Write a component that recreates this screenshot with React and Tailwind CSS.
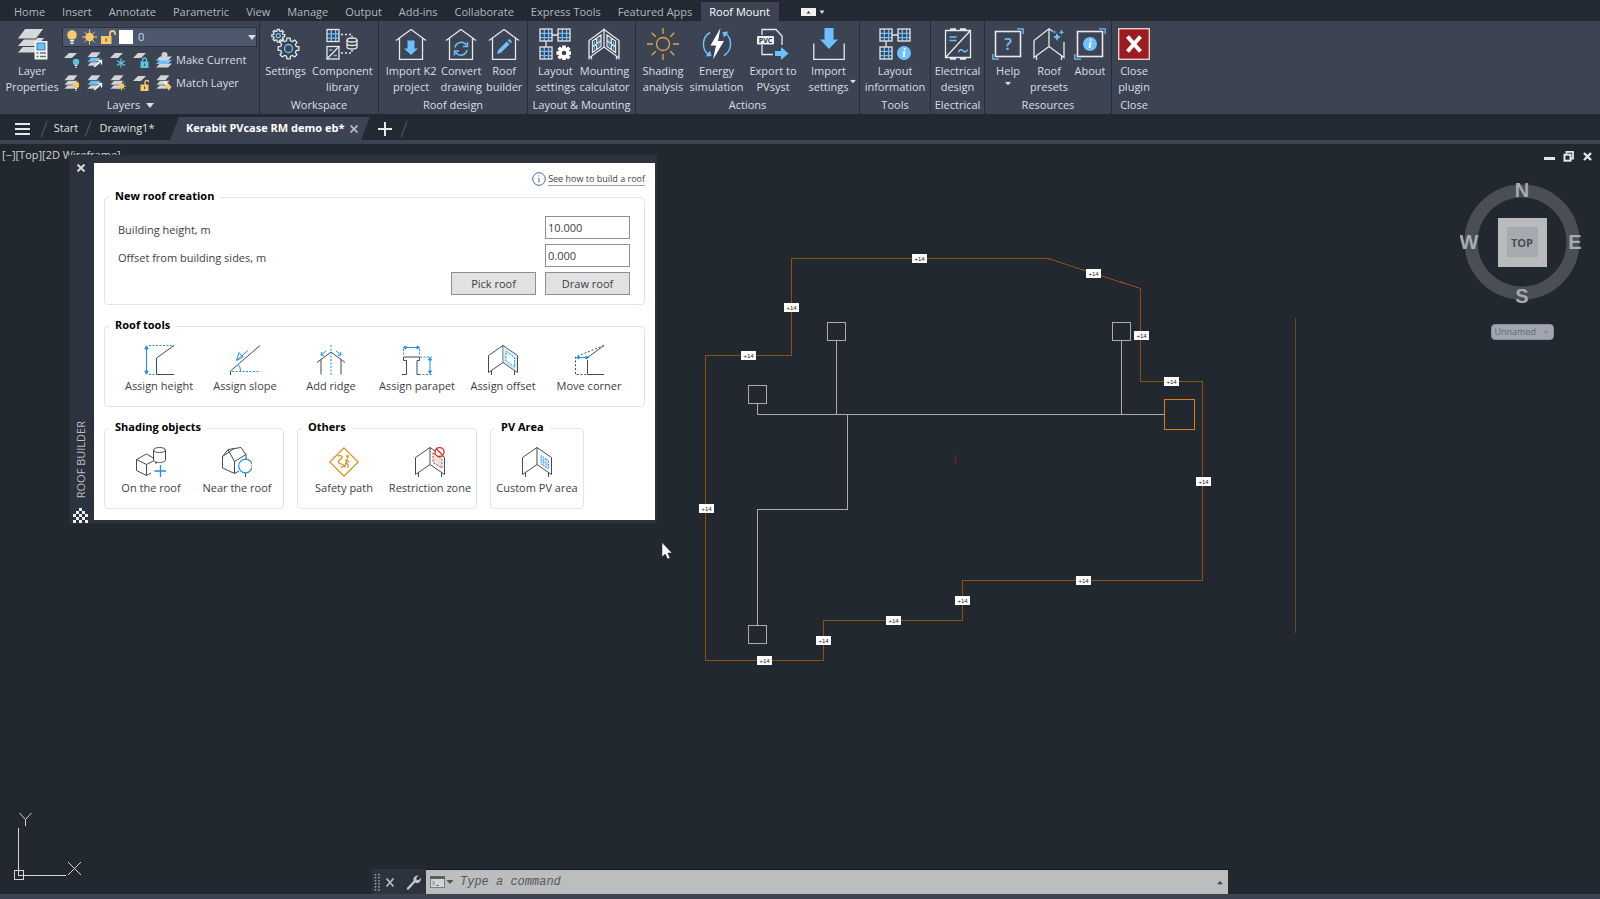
import { useState } from 'react';

// ─── SMALL DRAWING HELPERS ────────────────────────────────────────────────────
const WHITE = '#e6e8ea';
const BLUE = '#6cc0ff';
const INK = '#444a50';
const ACCENT = '#1e90f0';

const gearPath = (cx, cy, outer, inner, teeth) => {
    const pts = [];
    const step = (Math.PI * 2) / teeth;
    for (let i = 0; i < teeth; i++) {
        const a = i * step - Math.PI / 2;
        [[-0.32, inner], [-0.2, outer], [0.2, outer], [0.32, inner]].forEach(([o, r]) => {
            pts.push(`${(cx + Math.cos(a + o * step) * r).toFixed(2)} ${(cy + Math.sin(a + o * step) * r).toFixed(2)}`);
        });
    }
    return `M${pts.join('L')}Z`;
};

const Big = ({ children }) => (
    <svg viewBox="0 0 32 32" className="size-8 shrink-0" fill="none" stroke={WHITE} strokeWidth="1.3">{children}</svg>
);

const Tool = ({ children }) => (
    <svg viewBox="0 0 30 30" className="size-[30px] shrink-0" fill="none" stroke={INK} strokeWidth="1">{children}</svg>
);

const Caret = ({ className = '' }) => (
    <svg viewBox="0 0 8 5" className={`h-[5px] w-2 shrink-0 ${className}`} fill="currentColor"><path d="M0 0h8L4 5z" /></svg>
);

const PvGrid = ({ x, y }) => (
    <g>
        <path d={`M${x + 4.3} ${y}v12M${x + 8.6} ${y}v12M${x} ${y + 4.3}h12M${x} ${y + 8.6}h12`} stroke={BLUE} />
        <rect x={x} y={y} width="12" height="12" />
    </g>
);

const House = ({ children }) => (
    <Big>
        <path d="M1 12.5L16 1.5L31 12.5M4.5 10.5V31.3H27.5V10.5" />
        {children}
    </Big>
);

// ─── RIBBON ICONS ─────────────────────────────────────────────────────────────
const LayerPropertiesIcon = () => (
    <Big>
        <g fill="#d6d8da" stroke="#3c4352" strokeWidth="1">
            <path d="M1 25L9 16H29L21 25z" />
            <path d="M1 18.5L9 9.5H29L21 18.5z" />
            <path d="M1 11L9 .5H28L20 11z" />
        </g>
        <rect x="18.5" y="13" width="13" height="18.5" fill="#f2f3f4" stroke="none" />
        <rect x="21" y="15" width="8" height="7" fill={BLUE} stroke="#2c6ea8" strokeWidth=".8" />
        <path d="M20.5 25h2M24 25h6M20.5 28.5h2M24 28.5h6" stroke="#6a7078" />
    </Big>
);

const SettingsIcon = () => (
    <Big>
        <path d={gearPath(8.3, 7.7, 6.5, 4.8, 8)} />
        <circle cx="8.3" cy="7.7" r="2" stroke={BLUE} />
        <path d={gearPath(18.5, 20.5, 10.5, 8, 8)} />
        <circle cx="18.5" cy="20.5" r="4" stroke={BLUE} />
    </Big>
);

const ComponentIcon = () => (
    <Big>
        <PvGrid x={1} y={1.5} />
        <rect x="1" y="18.5" width="12" height="12.5" />
        <path d="M1 31L13 18.5" />
        <path d="M3 22h3.5M7.5 27.5h3.5" stroke={BLUE} />
        <path d="M15 6.5H26V9M15 25H26V22" strokeDasharray="2 2" />
        <ellipse cx="26" cy="12" rx="5" ry="2" />
        <path d="M21 12v7c0 1.3 2.2 2 5 2s5-.7 5-2v-7M21 15.5c0 1.3 2.2 2 5 2s5-.7 5-2" />
    </Big>
);

const ImportK2Icon = () => (
    <House><path d="M12.5 12.5h7v8h3.5L16 27L9 20.5h3.5z" fill={BLUE} stroke="none" /></House>
);

const ConvertIcon = () => (
    <House>
        <path d="M10 19.5a6.2 6.2 0 0 1 11.5-2M22 22a6.2 6.2 0 0 1-11.5 2" stroke={BLUE} strokeWidth="1.5" />
        <path d="M22.5 14v4.5H18M9.5 27.5v-4.5H14" stroke={BLUE} strokeWidth="1.5" />
    </House>
);

const BuilderIcon = () => (
    <House><path d="M9 26l1.2-4 8.500-8.500 2.800 2.800-8.500 8.500zM19.700 12.500l1-1a1 1 0 0 1 1.400 0l1.400 1.400a1 1 0 0 1 0 1.400l-1 1z" fill={BLUE} stroke="none" /></House>
);

const LayoutSettingsIcon = () => (
    <Big>
        <PvGrid x={1} y={1} />
        <PvGrid x={19} y={1} />
        <PvGrid x={1} y={19} />
        <path d="M13 7h6M7 13v6" />
        <path d={gearPath(25, 25, 7, 5, 8)} fill="#fff" stroke="#fff" />
        <circle cx="25" cy="25" r="2.3" fill="#3c4352" stroke="none" />
    </Big>
);

const MountingIcon = () => (
    <Big>
        <path d="M1 12.5L16 1.5V19L1 30zM31 12.5L16 1.5V19L31 30zM3.5 28.5V31.5M28.5 28.5V31.5M1 30v1.5M31 30v1.5" />
        <path d="M4.5 13L13 7V18.5L4.5 24.5zM8.7 10v11.5M4.5 18.7L13 12.7M27.5 13L19 7V18.5L27.5 24.5zM23.3 10v11.5M27.5 18.7L19 12.7" />
        <path d="M6.500 13.500v8M11 10.500v8M21 10.500v8M25.500 13.500v8" stroke={BLUE} strokeWidth="1" />
    </Big>
);

const ShadingIcon = () => (
    <Big>
        <g stroke="#e3a548">
            <circle cx="16" cy="16" r="6.5" />
            <path d="M16 0v6M16 26v6M0 16h6M26 16h6M4.7 4.7l4 4M23.3 23.3l4 4M4.7 27.3l4-4M23.3 8.7l4-4" />
        </g>
    </Big>
);

const EnergyIcon = () => (
    <Big>
        <path d="M9 4.5A13.5 13.5 0 0 0 8 27M23 27.5A13.5 13.5 0 0 0 24 5" stroke={BLUE} strokeWidth="1.5" />
        <path d="M4.5 28.5l6-.5-1.5-5.5zM27.5 3.5l-6 .5 1.5 5.5z" fill={BLUE} stroke="none" />
        <path d="M19.5 0L9.5 17.5h5.5L12 31.5L23 13h-6z" fill="#fff" stroke="none" />
    </Big>
);

const ExportIcon = () => (
    <Big>
        <path d="M5 7V1.500H19L25 8V17M5 17V26.500H16" />
        <rect x="0" y="8" width="17" height="8.500" rx="1" fill="#eef0f2" stroke="none" />
        <text x="8.500" y="14.700" textAnchor="middle" fontSize="7" fontWeight="700" fill="#2c333f" stroke="none" fontFamily="Open Sans, sans-serif">PVC</text>
        <path d="M18 23h6v-4l7.500 6.500L24 32v-4h-6z" fill={BLUE} stroke="none" />
    </Big>
);

const ImportSettingsIcon = () => (
    <Big>
        <path d="M.8 15.5V31.3H31.2V15.5" />
        <path d="M11.5 0h9v11.500h4.500L16 21L7 11.500h4.500z" fill={BLUE} stroke="none" />
    </Big>
);

const InfoDot = ({ cx, cy, r }) => (
    <g stroke="none">
        <circle cx={cx} cy={cy} r={r} fill={BLUE} />
        <text x={cx} y={cy + 4} textAnchor="middle" fontSize="12" fontStyle="italic" fontWeight="700" fill="#fff" fontFamily="Liberation Serif, serif">i</text>
    </g>
);

const LayoutInfoIcon = () => (
    <Big>
        <PvGrid x={1} y={1} />
        <PvGrid x={19} y={1} />
        <PvGrid x={1} y={19} />
        <path d="M13 7h6M7 13v6" />
        <InfoDot cx={25} cy={25} r={7} />
    </Big>
);

const ElectricalIcon = () => (
    <Big>
        <path d="M3.5 2.5H28.5V29.5H3.5zM4 29L28 3M8 1h6M18 1h6M8 31h6M18 31h6" />
        <path d="M7.5 9h7M7.5 12.5h7M16.5 24c1.5-2.8 3-2.8 4.5-1.2s3 1.6 4.5-1.3" stroke={BLUE} strokeWidth="1.6" />
    </Big>
);

const Framed = ({ children }) => (
    <Big>
        <rect x="3.5" y="3.5" width="25" height="25" strokeWidth="1.6" />
        <path d="M25 .8h6.200V6M7 31.200H.8V26" stroke={BLUE} />
        {children}
    </Big>
);

const HelpIcon = () => (
    <Framed><text x="16" y="22" textAnchor="middle" fontSize="17" fontWeight="600" fill={BLUE} stroke="none" fontFamily="Open Sans, sans-serif">?</text></Framed>
);

const AboutIcon = () => (
    <Framed><InfoDot cx={16} cy={16} r={7} /></Framed>
);

const PresetsIcon = () => (
    <Big>
        <path d="M20 3.500L16 .8L1 12.500V29.500L16 18.500L31 29.500V14M16 .8V18.500M3.500 28V32M28.500 28V32" />
        <path d="M24 5l1.300 2.700L28 9l-2.700 1.300L24 13l-1.300-2.700L20 9l2.700-1.300zM28.500 1.500l.8 2 2 .8-2 .8-.8 2-.8-2-2-.8 2-.8zM21.500 2l.5 1.500L23.500 4l-1.500.5-.5 1.500-.5-1.500-1.500-.5 1.500-.5z" fill={BLUE} stroke="none" />
    </Big>
);

const ClosePluginIcon = () => (
    <Big>
        <rect x=".7" y=".7" width="30.6" height="30.6" fill="#9c1c20" stroke="#f0d8d8" />
        <path d="M9.500 8.500L22.500 23.500M22.500 8.500L9.500 23.500" stroke="#fff" strokeWidth="4" />
    </Big>
);

// ─── LAYER STRIP ICONS ────────────────────────────────────────────────────────
const SHEET = '#d2d4d6';
const TEAL = '#5cc4de';
const YELLOW = '#f5c869';

const Small = ({ children }) => (
    <svg viewBox="0 0 16 16" className="size-4 shrink-0" fill="none">{children}</svg>
);

const OneSheet = () => <path d="M0 6L5 1H13L8 6z" fill={SHEET} />;
const Sheets = ({ mid = SHEET }) => (
    <g stroke="#3c4352" strokeWidth=".6">
        <path d="M0 14L4 9.5H14L10 14z" fill={SHEET} />
        <path d="M0 10L4 5.5H14L10 10z" fill={mid} />
        <path d="M0 5.5L4.5 0H14L9.5 5.5z" fill={SHEET} />
    </g>
);
const Bulb = ({ color }) => (
    <g><circle cx="12" cy="10" r="3.2" fill={color} /><path d="M10.8 13.5h2.4M11.2 15.2h1.600" stroke="#fff" /></g>
);
const Arrow = () => <path d="M7 15L14 9M14.5 12.5V8.5H10.5" stroke="#f4f6f8" strokeWidth="1.4" />;
const Flake = () => <path d="M11 6.5v9M7 8.800l8 4.600M15 8.800l-8 4.600" stroke={TEAL} strokeWidth="1.3" />;
const MiniSun = () => (
    <g><circle cx="11.5" cy="11" r="2.6" fill={YELLOW} /><path d="M11.5 6.5v9M7 11h9M8.3 7.8l6.4 6.4M14.7 7.8l-6.4 6.4" stroke={YELLOW} strokeWidth=".9" /></g>
);
const Padlock = ({ color, open }) => (
    <g>
        <path d={open ? 'M12 10V7.5a2 2 0 0 1 4 0' : 'M9.5 10V8a2 2 0 0 1 4 0v2'} stroke={color} strokeWidth="1.3" />
        <rect x="7.5" y="9.5" width="8" height="6.5" fill={color} />
        <path d="M11.5 11.5v2.5" stroke="#3c4352" />
    </g>
);

const LAYER_TOOLS = [
    { name: 'Off', icon: <Small><OneSheet /><Bulb color={TEAL} /></Small> },
    { name: 'Isolate', icon: <Small><Sheets mid={BLUE} /><Arrow /></Small> },
    { name: 'Freeze', icon: <Small><OneSheet /><Flake /></Small> },
    { name: 'Lock', icon: <Small><OneSheet /><Padlock color={TEAL} /></Small> },
    { name: 'Turn All Layers On', icon: <Small><Sheets /><Bulb color={YELLOW} /></Small> },
    { name: 'Unisolate', icon: <Small><Sheets mid={BLUE} /><Arrow /></Small> },
    { name: 'Thaw All Layers', icon: <Small><Sheets /><MiniSun /></Small> },
    { name: 'Unlock', icon: <Small><OneSheet /><Padlock color={YELLOW} open /></Small> },
];

const MakeCurrentIcon = () => (
    <Small>
        <path d="M0 15.5L4 11.5H16L12 15.5z" fill={SHEET} />
        <path d="M0 12L4 8H16L12 12z" fill={BLUE} />
        <path d="M0 8.5L4 4.5H16L12 8.5z" fill={SHEET} />
        <circle cx="8.5" cy="3" r="3" fill={SHEET} />
    </Small>
);

const MatchLayerIcon = () => (
    <Small>
        <Sheets />
        <path d="M9 8l2-1 4.5 5-2.5 3.5L9.5 12z" fill={YELLOW} />
        <path d="M8 6.5l3 3" stroke="#fff" strokeWidth="1.5" />
    </Small>
);

// ─── RIBBON DATA ──────────────────────────────────────────────────────────────
const MENU = ['Home', 'Insert', 'Annotate', 'Parametric', 'View', 'Manage', 'Output', 'Add-ins', 'Collaborate', 'Express Tools', 'Featured Apps', 'Roof Mount'];

const PANELS = [
    { title: 'Workspace', width: 'w-[119px]', gap: 'gap-1.5', items: [
        { icon: SettingsIcon, lines: ['Settings'] },
        { icon: ComponentIcon, lines: ['Component', 'library'] },
    ] },
    { title: 'Roof design', width: 'w-[149px]', gap: 'gap-1 pl-0.5', items: [
        { icon: ImportK2Icon, lines: ['Import K2', 'project'] },
        { icon: ConvertIcon, lines: ['Convert', 'drawing'] },
        { icon: BuilderIcon, lines: ['Roof', 'builder'] },
    ] },
    { title: 'Layout & Mounting', width: 'w-[108px]', gap: 'gap-1 pl-0.5', items: [
        { icon: LayoutSettingsIcon, lines: ['Layout', 'settings'] },
        { icon: MountingIcon, lines: ['Mounting', 'calculator'] },
    ] },
    { title: 'Actions', width: 'w-[224px]', gap: 'gap-1.5', items: [
        { icon: ShadingIcon, lines: ['Shading', 'analysis'] },
        { icon: EnergyIcon, lines: ['Energy', 'simulation'] },
        { icon: ExportIcon, lines: ['Export to', 'PVsyst'] },
        { icon: ImportSettingsIcon, lines: ['Import', 'settings'], menu: 'side' },
    ] },
    { title: 'Tools', width: 'w-[71px]', gap: '', items: [{ icon: LayoutInfoIcon, lines: ['Layout', 'information'] }] },
    { title: 'Electrical', width: 'w-[54px]', gap: '', items: [{ icon: ElectricalIcon, lines: ['Electrical', 'design'] }] },
    { title: 'Resources', width: 'w-[127px]', gap: 'gap-1.5 pl-0.5', items: [
        { icon: HelpIcon, lines: ['Help'], menu: 'below' },
        { icon: PresetsIcon, lines: ['Roof', 'presets'] },
        { icon: AboutIcon, lines: ['About'] },
    ] },
    { title: 'Close', width: 'w-11', gap: '', last: true, items: [{ icon: ClosePluginIcon, lines: ['Close', 'plugin'] }] },
];

const RibbonButton = ({ item }) => {
    const Icon = item.icon;
    return (
        <button type="button" className={`relative flex shrink-0 flex-col items-center whitespace-nowrap leading-4 ${item.menu === 'side' ? 'mr-1 ml-1.5' : ''}`}>
            <Icon />
            <span className="mt-[3px]">{item.lines[0]}</span>
            {item.lines[1] && <span>{item.lines[1]}</span>}
            {item.menu === 'below' && <Caret className="mt-0.5 scale-75" />}
            {item.menu === 'side' && <Caret className="absolute -right-2 bottom-3 scale-75" />}
        </button>
    );
};

const RibbonPanel = ({ panel }) => (
    <section className={`flex shrink-0 flex-col items-center pt-[7px] ${panel.width} ${panel.last ? '' : 'border-r border-[#262c36]'}`}>
        <div className={`flex h-[68px] justify-center ${panel.gap}`}>
            {panel.items.map((item) => <RibbonButton key={item.lines.join(' ')} item={item} />)}
        </div>
        <h2 className="mt-px whitespace-nowrap leading-4">{panel.title}</h2>
    </section>
);

const LayersPanel = () => (
    <section className="ml-0.5 flex w-[258px] shrink-0 flex-col border-r border-[#262c36] pt-[6px]">
        <div className="flex h-[69px]">
            <button type="button" className="flex w-[60px] flex-col items-center leading-4">
                <span className="pt-px"><LayerPropertiesIcon /></span>
                <span className="mt-[3px]">Layer</span>
                <span>Properties</span>
            </button>
            <div className="flex-1 pr-0.5">
                <div className="flex h-5 items-center border border-[#2c3340] bg-[#4b586e] px-1">
                    <svg viewBox="0 0 66 16" className="h-4 w-[66px] shrink-0" fill="none">
                        <circle cx="5" cy="6" r="4.8" fill={YELLOW} />
                        <path d="M3 11h4v1.5H3zM3.5 13.5h3V15h-3z" fill="#fff" />
                        <circle cx="22.5" cy="8" r="4.3" fill={YELLOW} />
                        <path d="M22.5 .5v15M15 8h15M17.2 2.7l10.6 10.6M27.8 2.7L17.2 13.3" stroke={YELLOW} />
                        <path d="M43 8V4.5a2.5 2.5 0 0 1 5 0V6" stroke={YELLOW} strokeWidth="1.8" />
                        <rect x="34" y="7" width="10.5" height="8" fill={YELLOW} />
                        <path d="M39.2 9.5v3" stroke="#6b5a30" strokeWidth="1.3" />
                        <rect x="52" y="1" width="14" height="14" fill="#fff" />
                    </svg>
                    <select aria-label="Layer" defaultValue="0" className="min-w-0 flex-1 appearance-none bg-transparent pl-[5px] outline-none">
                        <option>0</option>
                    </select>
                    <Caret className="-mr-1" />
                </div>
                <div className="mt-[5px] flex pl-0.5">
                    <div className="grid shrink-0 grid-cols-[repeat(4,16px)] gap-[7px]">
                        {LAYER_TOOLS.map((t) => <button key={t.name} type="button" aria-label={t.name}>{t.icon}</button>)}
                    </div>
                    <div className="flex flex-1 flex-col gap-[7px] pl-[7px] leading-4 whitespace-nowrap">
                        <button type="button" className="flex items-center gap-1"><MakeCurrentIcon />Make Current</button>
                        <button type="button" className="flex items-center gap-1"><MatchLayerIcon />Match Layer</button>
                    </div>
                </div>
            </div>
        </div>
        <button type="button" className="mt-px flex items-center justify-center gap-1.5 leading-4">Layers <Caret /></button>
    </section>
);

const Slash = () => (
    <svg viewBox="0 0 8 16" className="h-4 w-2 shrink-0" stroke="#59616d"><path d="M1 16L7 0" /></svg>
);

const FileTabs = () => (
    <nav aria-label="Drawings" className="flex h-[26px] items-end bg-[#222933] text-[#dfe1e3]">
        <div className="flex h-[23px] items-center">
            <button type="button" aria-label="Menu" className="ml-[15px] mr-2.5">
                <svg viewBox="0 0 15 12" className="h-3 w-[15px]" stroke={WHITE} strokeWidth="2"><path d="M0 1h15M0 6h15M0 11h15" /></svg>
            </button>
            <Slash />
            <button type="button" className="w-9 text-center">Start</button>
            <Slash />
            <button type="button" className="w-[70px] text-center">Drawing1*</button>
            <div className="ml-2 flex h-[23px] w-[200px] items-center justify-between bg-[#3c4352] pr-3 pl-4 [clip-path:polygon(9px_0,100%_0,calc(100%-9px)_100%,0_100%)]">
                <button type="button" className="font-bold whitespace-nowrap text-white">Kerabit PVcase RM demo eb*</button>
                <button type="button" aria-label="Close drawing">
                    <svg viewBox="0 0 8 8" className="size-2" stroke="#b4b9c0" strokeWidth="1.8"><path d="M.5.5l7 7M7.5.5l-7 7" /></svg>
                </button>
            </div>
            <button type="button" aria-label="New drawing" className="mr-2 ml-2">
                <svg viewBox="0 0 14 14" className="size-3.5" stroke={WHITE} strokeWidth="2"><path d="M7 0v14M0 7h14" /></svg>
            </button>
            <Slash />
        </div>
    </nav>
);

// ─── ROOF BUILDER PALETTE ─────────────────────────────────────────────────────
const RoofPair = ({ children }) => (
    <Tool>
        <path d="M.5 10.5L15 .5L29.5 10.5V27.5L15 17.5L.5 27.5zM15 .5V17.5M3.5 26V30M26.5 26V30" />
        {children}
    </Tool>
);

const ROOF_TOOLS = [
    { label: 'Assign height', icon: (
        <Tool>
            <path d="M30 .5L12.5 13V29.5H30" />
            <path d="M2.5 1V29M.8 4L2.5 .8L4.2 4zM.8 26l1.7 3.2L4.2 26z" stroke={ACCENT} fill={ACCENT} />
            <path d="M5 .5H28M5 29.5H11" stroke={ACCENT} strokeDasharray="2 1.5" />
        </Tool>
    ) },
    { label: 'Assign slope', icon: (
        <Tool>
            <path d="M30 .5L.5 26V30" />
            <path d="M18 5.5L7 15M9 7.5L6.5 15.5L13 12zM8.5 20a9 9 0 0 1 2 6" stroke={ACCENT} />
            <path d="M2 26.5H30" stroke={ACCENT} strokeDasharray="2 1.5" />
        </Tool>
    ) },
    { label: 'Add ridge', icon: (
        <Tool>
            <path d="M1 17.5L15 7L29 17.5M5 14.5V29.5M25 14.5V29.5" />
            <path d="M15 0V30" stroke={ACCENT} strokeDasharray="2 1.5" />
            <path d="M10 6L5 10M8 10.5L5 10l.5-3M20 6l5 4M22 10.5l3-.5-.5-3" stroke={ACCENT} />
        </Tool>
    ) },
    { label: 'Assign parapet', icon: (
        <Tool>
            <path d="M1.5 12H17.5V15.5H15V29.5M1.5 12V15.5H4.5V29.5H0M15 29.5h2" />
            <path d="M1.5 2.5h16M4 1L1.5 2.5L4 4zM15 1l2.500 1.500L15 4zM28 12.500v16M26.500 15L28 12.500l1.500 2.500zM26.500 26l1.500 2.500 1.500-2.500z" stroke={ACCENT} fill={ACCENT} />
            <path d="M1.5 4V11M17.5 4V11M18 12h12M17 29.5H30" stroke={ACCENT} strokeDasharray="2 1.5" />
        </Tool>
    ) },
    { label: 'Assign offset', icon: (
        <RoofPair>
            <path d="M15.5 1.5L29 11V26.5L15.5 17z" fill="#d5ecfb" stroke="none" />
            <path d="M18 6.5L26.5 12.5V22L18 16z" fill="#fff" stroke={ACCENT} strokeDasharray="2 1.3" />
        </RoofPair>
    ) },
    { label: 'Move corner', icon: (
        <Tool>
            <path d="M30 .5L13.5 12.5M13.5 15V29.5H30" />
            <path d="M30 .5L1.5 12V29.5H12" strokeDasharray="2 1.8" />
            <path d="M2.5 12.5H14M5 11L2.5 12.5L5 14zM12 11l2.5 1.5L12 14z" stroke={ACCENT} fill={ACCENT} />
        </Tool>
    ) },
];

const SHADING_TOOLS = [
    { label: 'On the roof', icon: (
        <Tool>
            <path d="M.5 12.5L10.5 7L20 12.5V17M.5 12.5V23.5L10.5 28.5V17.5L.5 12.5M10.5 17.5L20 12.5M10.5 28.5L15 26" />
            <path d="M17.5 3v10c0 1.5 3 2.5 6 2.5s6-1 6-2.5V3" fill="#fff" />
            <ellipse cx="23.5" cy="3" rx="6" ry="2.5" fill="#fff" />
            <path d="M24.5 18V30M18.5 24H30.5" stroke={ACCENT} strokeWidth="1.3" />
        </Tool>
    ) },
    { label: 'Near the roof', icon: (
        <Tool>
            <path d="M.5 9.5L6 2.5L19 .5L24 7.5V14M.5 9.5V21L12.5 26.5V14.5L6 2.5M12.5 14.5L24 7.5M12.5 26.5L17 24M12 1.5L.5 9.5M23.5 26V30" />
            <circle cx="23.5" cy="19" r="6.8" fill="#fff" stroke={ACCENT} strokeWidth="1.2" />
        </Tool>
    ) },
];

const OTHER_TOOLS = [
    { label: 'Safety path', icon: (
        <Tool>
            <g stroke="#d98c1f" strokeWidth="1.2">
                <path d="M15 .8L29.2 15L15 29.2L.8 15z" />
                <path d="M8.500 9c4-1 6 .5 4 2.500s-4 2-3 4 4 1 5 2.500-1 2.500-3 2M18.500 11.500l-1.500 4 2 2v3.500M17 15.500l-1.500 5M16 13l4.500 2" />
                <circle cx="18.500" cy="9.500" r=".8" />
            </g>
        </Tool>
    ) },
    { label: 'Restriction zone', icon: (
        <RoofPair>
            <path d="M18 6L27 12V21L18 15.5z" fill="#e3e5e7" stroke="#e03020" strokeDasharray="2 1.5" />
            <circle cx="24.5" cy="5" r="4.5" fill="#fff" stroke="#e03020" strokeWidth="1.3" />
            <path d="M21.500 2L27.500 8" stroke="#e03020" strokeWidth="1.3" />
        </RoofPair>
    ) },
];

const PV_TOOLS = [
    { label: 'Custom PV area', icon: (
        <RoofPair>
            <path d="M19 8.5L26.5 13.5V22L19 17z" fill="#cfe8fa" stroke={ACCENT} strokeDasharray="1.5 1" />
            <path d="M21.5 10v8.5M24 12v8.5M19 12.8l7.500 5" stroke={ACCENT} strokeWidth=".6" strokeDasharray="1.5 1" />
        </RoofPair>
    ) },
];

const LEGEND = 'ml-1 px-1.5 pb-0.5 font-bold leading-4 text-black';

const ToolGroup = ({ title, tools, pad = 'px-[3px]' }) => (
    <fieldset className="rounded border border-[#dfe5e8] pb-3">
        <legend className={LEGEND}>{title}</legend>
        <div className={`flex pt-2.5 ${pad}`}>
            {tools.map((t) => (
                <button key={t.label} type="button" className="flex w-[86px] flex-col items-center gap-[3px] leading-4 whitespace-nowrap">
                    {t.icon}
                    {t.label}
                </button>
            ))}
        </div>
    </fieldset>
);

const FIELD = 'h-[23px] w-[85px] border border-[#8b9097] leading-4';

const RoofBuilder = () => {
    const [height, setHeight] = useState('10.000');
    const [offset, setOffset] = useState('0.000');

    return (
        <aside aria-label="Roof builder" className="absolute top-[11px] left-[69px] flex w-[588px] border border-[#2a303b] bg-[#2c333f] pt-[7px] pr-px">
            <div className="flex w-6 shrink-0 flex-col items-center pr-[3px]">
                <button type="button" aria-label="Close palette" className="mt-px">
                    <svg viewBox="0 0 8 8" className="size-2" stroke="#d8dade" strokeWidth="2"><path d="M.5.5l7 7M7.5.5l-7 7" /></svg>
                </button>
                <span className="mt-auto rotate-180 text-[#b9bdc4] [writing-mode:vertical-rl] leading-4">ROOF BUILDER</span>
                <svg viewBox="0 0 15 15" className="mt-2.5 size-[15px]" fill="#eceef0">
                    <path d="M6 0h3v3H6zM3 3h3v3H3zM9 3h3v3H9zM0 6h3v3H0zM6 6h3v3H6zM12 6h3v3h-3zM3 9h3v3H3zM9 9h3v3H9zM0 12h3v3H0zM6 12h3v3H6zM12 12h3v3h-3z" />
                </svg>
            </div>
            <div className="mb-[3px] flex-1 bg-white px-2.5 pt-2 pb-[11px] text-[#3a3f45]">
                <a href="#help" className="flex h-4 items-center justify-end gap-0.5 text-[9px]">
                    <svg viewBox="0 0 14 14" className="size-3.5" fill="none" stroke="#3f6c92"><circle cx="7" cy="7" r="6.3" /><path d="M7 6v4.5M7 3.5v1" /></svg>
                    <span className="border-b border-[#9a9fa5] leading-3">See how to build a roof</span>
                </a>
                <fieldset className="mt-px rounded border border-[#dfe5e8] pb-[9px]">
                    <legend className={LEGEND}>New roof creation</legend>
                    <div className="flex flex-col gap-[5px] pt-2.5 pr-3.5 pl-[13px]">
                        <div className="flex items-center justify-between">
                            <label htmlFor="height" className="pt-[5px]">Building height, m</label>
                            <input id="height" value={height} onChange={(e) => setHeight(e.target.value)} className={`${FIELD} bg-white px-0.5`} />
                        </div>
                        <div className="flex items-center justify-between">
                            <label htmlFor="offset" className="pt-[5px]">Offset from building sides, m</label>
                            <input id="offset" value={offset} onChange={(e) => setOffset(e.target.value)} className={`${FIELD} bg-white px-0.5`} />
                        </div>
                        <div className="flex justify-end gap-[9px]">
                            <button type="button" className={`${FIELD} bg-[#e1e1e1]`}>Pick roof</button>
                            <button type="button" className={`${FIELD} bg-[#e1e1e1]`}>Draw roof</button>
                        </div>
                    </div>
                </fieldset>
                <div className="mt-3">
                    <ToolGroup title="Roof tools" tools={ROOF_TOOLS} pad="px-[11px]" />
                </div>
                <div className="mt-3 flex gap-[13px]">
                    <ToolGroup title="Shading objects" tools={SHADING_TOOLS} />
                    <ToolGroup title="Others" tools={OTHER_TOOLS} />
                    <ToolGroup title="PV Area" tools={PV_TOOLS} />
                </div>
            </div>
        </aside>
    );
};

// ─── DRAWING AREA ─────────────────────────────────────────────────────────────
const HEIGHT_TAGS = [
    [919, 258], [1093, 273], [791, 307], [748, 355], [1141, 335], [1171, 381], [1203, 481],
    [706, 508], [1083, 580], [962, 600], [893, 620], [823, 640], [764, 660],
];

const Plan = () => (
    <svg viewBox="680 240 640 440" className="absolute top-24 left-[680px] h-[440px] w-[640px]" fill="none" shapeRendering="crispEdges">
        <path d="M791.5 258.5H1048L1140.5 288.5V381.5H1202.5V580.5H962.5V620.5H823.5V660.5H705.5V355.5H791.5z" stroke="#944e0c" />
        <path d="M1295.5 318V633" stroke="#65471f" />
        <g stroke="#a9adb1">
            <path d="M757.5 403V414.5H1164M836.5 341V414M1121.5 341V414M847.5 414V509.5H757.5V625" />
            <path d="M827.5 322.5h18v18h-18zM748.5 385.5h18v18h-18zM748.5 625.5h18v18h-18zM1112.5 322.5h18v18h-18z" />
        </g>
        <rect x="1164.5" y="399.5" width="30" height="30" stroke="#e07c14" />
        {HEIGHT_TAGS.map(([x, y]) => (
            <g key={`${x}-${y}`} fontFamily="Liberation Sans, sans-serif">
                <rect x={x - 7} y={y - 4} width="15" height="9" fill="#fff" />
                <text x={x + 0.5} y={y + 2.8} textAnchor="middle" fontSize="6" fill="#222">+14</text>
            </g>
        ))}
        <text x="955" y="464" textAnchor="middle" fontSize="12" fill="#8f1b22" fontFamily="Open Sans, sans-serif">1</text>
    </svg>
);

const ViewCube = () => (
    <div className="absolute top-[34px] right-4 flex w-[124px] flex-col items-center">
        <svg viewBox="0 0 124 128" className="h-32 w-[124px]" fontFamily="Liberation Sans, sans-serif" fontWeight="700" fontSize="20" textAnchor="middle" fill="#a8abae">
            <circle cx="62" cy="64" r="51" fill="none" stroke="#4a4f57" strokeWidth="13" />
            <text x="62" y="19">N</text>
            <text x="62" y="125">S</text>
            <text x="9" y="71">W</text>
            <text x="115" y="71">E</text>
            <path d="M38 40h49v49H38z" fill="#b9babb" />
            <path d="M47 49h31v30H47z" fill="#a6a9ad" />
            <text x="62" y="69" fontSize="11" fill="#474d59" fontFamily="Open Sans, sans-serif">TOP</text>
        </svg>
        <button type="button" className="mt-[18px] flex h-4 w-[63px] items-center justify-between rounded border border-[#8b8fa0] bg-[#a2a5b0] px-[3px] text-[9px] leading-3 text-[#626678]">
            Unnamed <Caret className="scale-75 text-[#8b8fa0]" />
        </button>
    </div>
);

const WindowControls = () => (
    <div className="absolute top-[7px] right-[7px] flex gap-2">
        <button type="button" aria-label="Minimize"><svg viewBox="0 0 11 11" className="size-[11px]"><path d="M0 6h11v3H0z" fill="#e4e6e8" /></svg></button>
        <button type="button" aria-label="Restore"><svg viewBox="0 0 11 11" className="size-[11px]" fill="none" stroke="#e4e6e8"><path d="M3.5 2.700V.9H10V7.500H8" strokeWidth="1.8" /><rect x="1.500" y="3.700" width="6" height="6" strokeWidth="2" /></svg></button>
        <button type="button" aria-label="Close"><svg viewBox="0 0 11 11" className="size-[11px]" stroke="#e4e6e8" strokeWidth="2.4"><path d="M2 2l7 7M9 2l-7 7" /></svg></button>
    </div>
);

const CommandLine = () => (
    <div className="absolute bottom-0 left-[372px] flex h-[25px] w-[856px] items-center bg-[#2c333f]">
        <svg viewBox="0 0 54 24" className="h-6 w-[54px] shrink-0" fill="none">
            <path d="M3.5 4V21M7 4V21" stroke="#a2a7ae" strokeWidth="1.5" strokeDasharray="1.5 1.5" />
            <path d="M14.5 8.5l7 8M21.5 8.5l-7 8" stroke="#b6bac0" strokeWidth="1.8" />
            <path d="M36 18.5L43 11" stroke="#c2c5ca" strokeWidth="2.5" strokeLinecap="round" />
            <path d="M46.5 5.5L44 8.2l.8 1.5 1.7.5 2.3-2.5c.5 2.3-.8 5-3.3 5.3-2.8.3-4.5-2-4-4.200.4-2.300 2.700-3.800 5-3.300z" fill="#c2c5ca" />
        </svg>
        <div className="flex h-full flex-1 items-center border-t border-[#12161e] bg-[#bcbdbe] px-1">
            <svg viewBox="0 0 24 12" className="h-3 w-6 shrink-0" fill="none">
                <rect x=".5" y=".5" width="14" height="11" fill="#d2d3d4" stroke="#7b7f84" />
                <path d="M0 0h15v3H0z" fill="#5b6066" />
                <path d="M2.5 5l2 2-2 2M6 9.5h3" stroke="#6c7176" />
                <path d="M16.5 4h7L20 8z" fill="#4d5258" />
            </svg>
            <input aria-label="Command" placeholder="Type a command" className="ml-1.5 min-w-0 flex-1 bg-transparent font-['Liberation_Mono',monospace] text-xs italic outline-none placeholder:text-[#55595e]" />
            <Caret className="rotate-180 scale-75 text-[#44484e]" />
        </div>
    </div>
);

const App = () => {
    const [tab, setTab] = useState('Roof Mount');

    return (
        <div className="flex min-h-screen flex-col overflow-hidden bg-[#212830] font-['Open_Sans','Noto_Sans',sans-serif] text-[11px] text-[#dcdee0]">
            <nav aria-label="Ribbon tabs" className="flex h-[21px] items-end bg-[#222933] pl-1.5">
                {MENU.map((m) => (
                    <button
                        key={m}
                        type="button"
                        onClick={() => setTab(m)}
                        className={`h-[19px] pr-[9px] pl-2 leading-[18px] whitespace-nowrap ${m === tab ? 'bg-[#3c4352] text-white' : 'text-[#b4b8bd]'}`}
                    >
                        {m}
                    </button>
                ))}
                <button type="button" aria-label="Ribbon display" className="mb-[5px] ml-[22px]">
                    <svg viewBox="0 0 24 8" className="h-2 w-6"><path d="M0 0h15v8H0z" fill="#f0f0f0" /><path d="M5.5 5.5L7.5 3l2 2.5z" fill="#333" /><path d="M18.5 2.5h5L21 6z" fill="#d8dade" /></svg>
                </button>
            </nav>
            <header className="flex h-[93px] bg-[#3c4352]">
                <LayersPanel />
                {PANELS.map((p) => <RibbonPanel key={p.title} panel={p} />)}
            </header>
            <FileTabs />
            <div className="h-1 bg-[#3c4352]" />
            <main className="relative flex-1">
                <p className="pt-[3px] pl-0.5 leading-4 text-[#d0d3d6]">[−][Top][2D Wireframe]</p>
                <Plan />
                <RoofBuilder />
                <WindowControls />
                <ViewCube />
                <svg viewBox="0 0 90 75" className="absolute bottom-2.5 left-0 h-[75px] w-[90px]" fill="none" stroke="#d4d6d8">
                    <path d="M18.500 19V66.500H66M14.500 61.500h9v9h-9z" shapeRendering="crispEdges" />
                    <path d="M19.500 4L25.500 10.500L31.500 4M25.500 10.500V17M68 53L81 66M81 53L68 66" />
                </svg>
                <svg viewBox="0 0 12 18" className="absolute top-[398px] left-[661px] h-[18px] w-3"><path d="M1 .5V15l3.300-3 2.200 5 2.500-1-2.200-5H11z" fill="#fff" stroke="#222" strokeWidth=".5" /></svg>
                <CommandLine />
            </main>
            <footer className="h-[5px] bg-[#3c4352]" />
        </div>
    );
};

export default App;
